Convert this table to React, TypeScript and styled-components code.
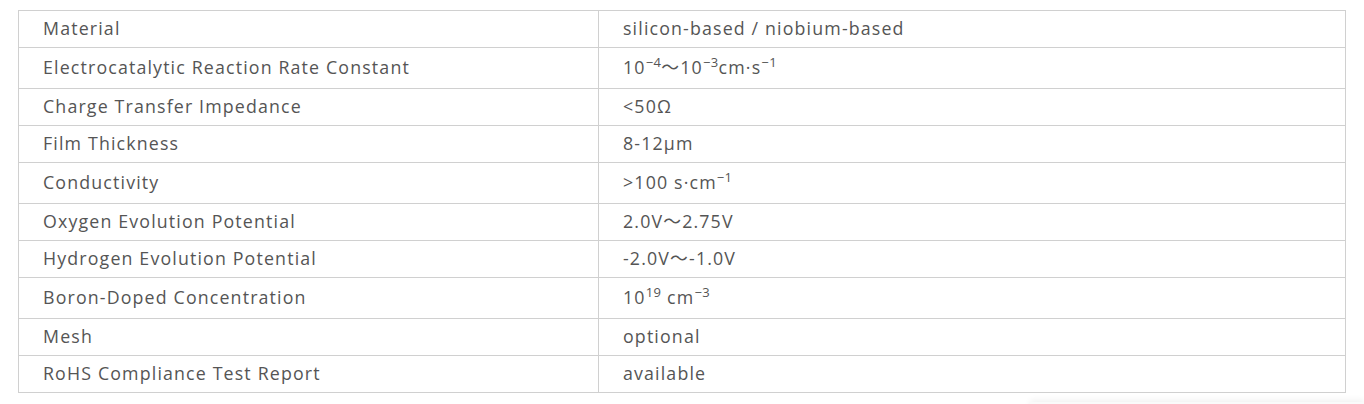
import React from 'react';
import styled, {createGlobalStyle} from "styled-components";

const GlobalStyle = createGlobalStyle`
  body {
    margin: 0;
    background: #fff;
    font-family: "Open Sans", "Noto Sans CJK SC", "Liberation Sans", sans-serif;
  }
`

type SpecRowType = {
    name: string,
    value: React.ReactNode,
    tall?: boolean
}

const rows: SpecRowType[] = [
    {name: "Material", value: "silicon-based / niobium-based"},
    {name: "Electrocatalytic Reaction Rate Constant", value: <>10<sup>−4</sup>～10<sup>−3</sup>cm·s<sup>−1</sup></>, tall: true},
    {name: "Charge Transfer Impedance", value: "<50Ω"},
    {name: "Film Thickness", value: "8-12μm"},
    {name: "Conductivity", value: <>&gt;100 s·cm<sup>−1</sup></>, tall: true},
    {name: "Oxygen Evolution Potential", value: "2.0V～2.75V"},
    {name: "Hydrogen Evolution Potential", value: "-2.0V～-1.0V"},
    {name: "Boron-Doped Concentration", value: <>10<sup>19</sup> cm<sup>−3</sup></>, tall: true},
    {name: "Mesh", value: "optional"},
    {name: "RoHS Compliance Test Report", value: "available"},
]

export default function App() {
    return (
        <Page>
            <GlobalStyle/>
            <SpecTable>
                <tbody>
                {rows.map(r => (
                    <Row key={r.name} $tall={r.tall}>
                        <NameCell>{r.name}</NameCell>
                        <ValueCell>{r.value}</ValueCell>
                    </Row>
                ))}
                </tbody>
            </SpecTable>
            <FloatShadow/>
        </Page>
    );
}

const Page = styled.div`
  position: relative;
  height: 404px;
  padding: 10px 19px 0 18px;
  box-sizing: border-box;
  overflow: hidden;
`

const SpecTable = styled.table`
  width: 1328px;
  border-collapse: collapse;
  table-layout: fixed;
  color: #555;
  font-size: 17.8px;
  letter-spacing: 1.15px;
`

const Row = styled.tr<{ $tall?: boolean }>`
  height: ${p => p.$tall ? 41 : 37}px;

  td {
    border: 1px solid #d0d0d0;
    padding: 0 24px 2px;
    line-height: 24px;
    vertical-align: middle;
    white-space: nowrap;
  }

  sup {
    font-size: 13px;
    letter-spacing: 0.4px;
    line-height: 0;
    vertical-align: 7px;
  }
`

const NameCell = styled.td`
  width: 531px;
`

const ValueCell = styled.td`
`

const FloatShadow = styled.div`
  position: absolute;
  left: 1030px;
  right: 0;
  top: 402px;
  height: 20px;
  box-shadow: 0 -2px 6px rgba(0, 0, 0, 0.06);
  background: #fafafa;
`
